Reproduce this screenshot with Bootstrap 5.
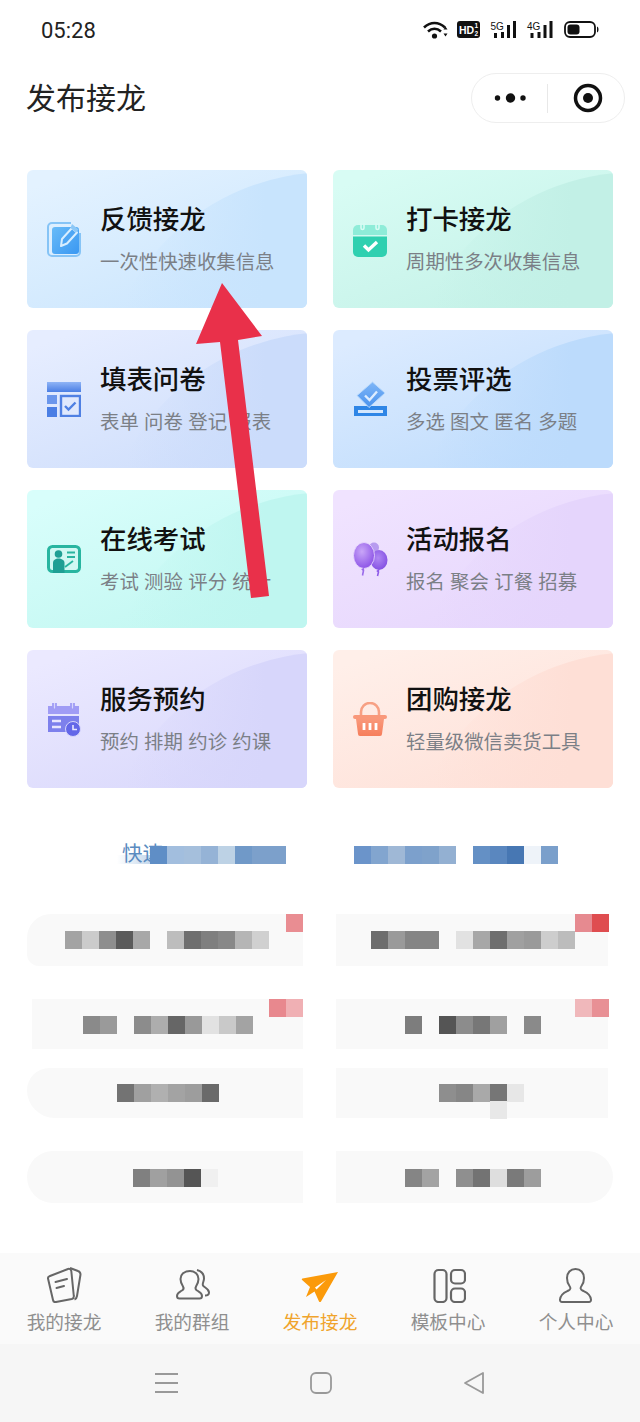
<!DOCTYPE html>
<html lang="zh-CN">
<head>
    <meta charset="UTF-8">
    <meta name="viewport" content="width=device-width, initial-scale=1.0">
    <title>发布接龙</title>
    <link rel="stylesheet" href="https://cdn.jsdelivr.net/npm/bootstrap@5.3.0/dist/css/bootstrap.min.css">
    <style>
        body {
            width: 640px;
            height: 1422px;
            overflow: hidden;
            background: #fff;
            font-family: "Noto Sans CJK SC", "Liberation Sans", sans-serif;
            position: relative;
        }
        svg { display: block; }

        .status-bar { height: 60px; padding: 0 40px 0 41px; }
        .status-time { font-family: Roboto, sans-serif; font-size: 22px; color: #222; }

        .top-bar { height: 50px; margin: 13px 15px 0 26px; }
        .page-title { font-size: 30px; color: #222; line-height: 46px; margin-bottom: 4px; }
        .capsule {
            width: 154px;
            height: 50px;
            border: 1px solid #eeeeee;
            border-radius: 25px;
        }
        .capsule-dots { margin-left: 18px; }
        .capsule-line { width: 1px; height: 29px; margin-left: 12px; background: #e8e8e8; }
        .capsule-target { margin-left: 25px; }

        .jl-grid {
            display: grid;
            grid-template-columns: 280px 280px;
            grid-auto-rows: 138px;
            gap: 22px 26px;
            margin: 47px 0 0 27px;
        }
        .jl-card {
            position: relative;
            overflow: hidden;
            border-radius: 6px;
            padding-left: 20px;
            background: linear-gradient(160deg, var(--c1) 8%, var(--c2) 100%);
        }
        .jl-card::before {
            content: "";
            position: absolute;
            left: 73px;
            top: 2px;
            width: 460px;
            height: 460px;
            border-radius: 50%;
            background: linear-gradient(90deg, transparent 6%, var(--c2) 36%);
        }
        .jl-card > * { position: relative; }
        .jl-icon { width: 34px; margin-right: 19px; }
        .jl-text { padding-bottom: 3px; }
        .jl-name { font-size: 26.4px; line-height: 36px; font-weight: 500; color: #111; }
        .jl-desc { font-size: 19.4px; line-height: 28px; margin-top: 11px; color: #7b7f86; white-space: nowrap; word-spacing: 1px; }

        .c-blue { --c1: #e3f2ff; --c2: #c8e4fd; }
        .c-mint { --c1: #d8fcf4; --c2: #c2f0e6; }
        .c-peri { --c1: #e6edff; --c2: #cbdcfb; }
        .c-sky { --c1: #dcebff; --c2: #bcdbfc; }
        .c-aqua { --c1: #d8fefb; --c2: #bff6f0; }
        .c-lilac { --c1: #f0e3ff; --c2: #e5d5fc; }
        .c-violet { --c1: #ebe9ff; --c2: #d7d6fb; }
        .c-peach { --c1: #ffefe9; --c2: #fedfd6; }

        .quick-head { position: relative; height: 18px; margin-top: 58px; }
        .quick-head::before {
            content: "";
            position: absolute;
            left: 117px;
            top: 9px;
            width: 33px;
            height: 9px;
            background: linear-gradient(90deg, #fff, #c5d8ec);
        }
        .quick-text {
            position: absolute;
            left: 122px;
            top: -8px;
            font-size: 20.5px;
            line-height: 28px;
            color: #5a8bc0;
        }
        .pixel-strip { position: absolute; display: flex; height: 18px; }
        .pixel { width: 17px; height: 100%; flex: none; }

        .fuzzy-rows { margin: 50px 0 0 27px; }
        .fuzzy-row { display: flex; align-items: flex-start; }
        .fuzzy-pill { position: relative; background: #f9f9f9; flex: none; }

        .tab-bar {
            position: absolute;
            left: 0;
            right: 0;
            bottom: 78px;
            height: 91px;
            background: #fafafa;
        }
        .tab-item { width: 128px; padding-top: 14px; font-size: 18.7px; line-height: 26px; color: #8f8f8f; }
        .tab-item svg { margin: 0 auto 5px; }
        .tab-on { color: #f0a42c; }
        .sys-bar {
            position: absolute;
            left: 0;
            right: 0;
            bottom: 0;
            height: 78px;
            background: #f6f6f6;
        }
        .red-arrow { position: absolute; left: 190px; top: 280px; }
    </style>
</head>
<body>

<div class="status-bar d-flex align-items-center justify-content-between">
    <span class="status-time">05:28</span>
    <svg width="177" height="20" viewBox="0 0 177 20">
        <g fill="none" stroke="#111" stroke-width="2.6">
            <path d="M1 7.5C7.5 1.5 15.5 1.5 22 7.5"/>
            <path d="M5 11.5C9 8 14 8 18 11.5"/>
        </g>
        <circle cx="11.500" cy="16" r="2.600" fill="#111"/>
        <path d="M21 10l2-3 2 3zM21 14l2 3 2-3z" fill="#111" transform="translate(-.5 -.5)"/>
        <rect x="34" y="1" width="23" height="17" rx="3" fill="#111"/>
        <text x="36" y="14" font-family="Liberation Sans" font-weight="700" font-size="10.500" fill="#fff">HD</text>
        <text x="51.500" y="8" font-family="Liberation Sans" font-weight="700" font-size="6.500" fill="#fff">1</text>
        <text x="51.500" y="16" font-family="Liberation Sans" font-weight="700" font-size="6.500" fill="#fff">2</text>
        <g fill="#111">
            <text x="67.500" y="9.500" font-family="Liberation Sans" font-size="10">5G</text>
            <rect x="71" y="13" width="3" height="5"/><rect x="78" y="12" width="3" height="6"/>
            <rect x="84" y="5" width="3" height="13"/><rect x="90" y="1" width="3" height="17"/>
            <text x="104" y="9.500" font-family="Liberation Sans" font-size="10">4G</text>
            <rect x="107.500" y="13" width="3" height="5"/><rect x="114.500" y="12" width="3" height="6"/>
            <rect x="120.500" y="5" width="3" height="13"/><rect x="126.500" y="1" width="3" height="17"/>
        </g>
        <rect x="142" y="2" width="30" height="15" rx="5" fill="none" stroke="#111" stroke-width="1.800"/>
        <rect x="144.500" y="4.500" width="12" height="10" rx="3" fill="#111"/>
        <path d="M174 6.500c2 .5 2 5.500 0 6z" fill="#111"/>
    </svg>
</div>

<div class="top-bar d-flex align-items-center justify-content-between">
    <div class="page-title">发布接龙</div>
    <div class="capsule d-flex align-items-center">
        <svg class="capsule-dots" width="45" height="12" viewBox="0 0 45 12">
            <circle cx="7.500" cy="6" r="2.700" fill="#111"/><circle cx="20.500" cy="6" r="4.700" fill="#111"/><circle cx="33" cy="6" r="2.700" fill="#111"/>
        </svg>
        <div class="capsule-line"></div>
        <svg class="capsule-target" width="30" height="30" viewBox="0 0 30 30">
            <circle cx="15" cy="15" r="12.500" fill="none" stroke="#111" stroke-width="3.500"/><circle cx="15" cy="15" r="5" fill="#111"/>
        </svg>
    </div>
</div>

<div class="jl-grid">
    <div class="jl-card c-blue d-flex align-items-center">
        <svg class="jl-icon" height="36" viewBox="0 0 34 36">
            <defs><linearGradient id="g1" x1="0" y1="0" x2="1" y2="1"><stop offset="0" stop-color="#68bbf8"/><stop offset="1" stop-color="#3a98f2"/></linearGradient></defs>
            <path d="M24 2H5a4 4 0 0 0-4 4v25a4 4 0 0 0 4 4h24a4 4 0 0 0 4-4V12" fill="none" stroke="#86c4f6" stroke-width="2"/>
            <rect x="5" y="6" width="27" height="27" rx="3" fill="url(#g1)"/>
            <path d="M14 25l1-7 10-11 5 4.500-10 11z" fill="#4ea6f4" stroke="#d8eeff" stroke-width="2" stroke-linejoin="round"/>
            <path d="M25 3l6.500 5.500-2.500 3-5.500-4.500z" fill="#8cc8f7"/>
        </svg>
        <div class="jl-text"><div class="jl-name">反馈接龙</div><div class="jl-desc">一次性快速收集信息</div></div>
    </div>
    <div class="jl-card c-mint d-flex align-items-center">
        <svg class="jl-icon" height="36" viewBox="0 0 34 36">
            <path d="M5 4h24a5 5 0 0 1 5 5v5H0V9a5 5 0 0 1 5-5z" fill="#8eecd8"/>
            <path d="M0 15.500h34V31a5 5 0 0 1-5 5H5a5 5 0 0 1-5-5z" fill="#2fd0b0"/>
            <path d="M8 2v5a1.500 1.500 0 0 0 3 0V2M23 2v5a1.500 1.500 0 0 0 3 0V2" stroke="#d8fcf4" stroke-width="1.600" fill="none"/>
            <path d="M11 24.500l4.500 4.500 8.500-8" fill="none" stroke="#fff" stroke-width="3.400"/>
        </svg>
        <div class="jl-text"><div class="jl-name">打卡接龙</div><div class="jl-desc">周期性多次收集信息</div></div>
    </div>
    <div class="jl-card c-peri d-flex align-items-center">
        <svg class="jl-icon" height="35" viewBox="0 0 34 35">
            <defs><linearGradient id="g3" x1="0" y1="0" x2="0" y2="1"><stop offset="0" stop-color="#8fb4f6"/><stop offset="1" stop-color="#4a7ee4"/></linearGradient></defs>
            <rect x="0" y="0" width="34" height="10" fill="url(#g3)"/>
            <rect x="0" y="13" width="10" height="9" fill="#6a96ec"/>
            <rect x="0" y="25" width="10" height="10" fill="#4a7ee4"/>
            <rect x="14" y="14" width="19" height="20" fill="#dfe8fd" stroke="#4f80e3" stroke-width="2.400"/>
            <path d="M18 24l3.500 3.500 7-7" fill="none" stroke="#4f80e3" stroke-width="2.400"/>
        </svg>
        <div class="jl-text"><div class="jl-name">填表问卷</div><div class="jl-desc">表单 问卷 登记 报表</div></div>
    </div>
    <div class="jl-card c-sky d-flex align-items-center">
        <svg class="jl-icon" height="37" viewBox="0 0 34 37">
            <defs><linearGradient id="g4" x1="0" y1="0" x2="0" y2="1"><stop offset="0" stop-color="#7fb6f7"/><stop offset="1" stop-color="#4a93ee"/></linearGradient></defs>
            <path d="M1 25h33v10H1z" fill="#2f86e6"/>
            <path d="M5 29h25v3H5z" fill="#d4e7fd"/>
            <path d="M19.500 1L32 12 16 26.500 4 14.500z" fill="url(#g4)" stroke="#bcdbfc" stroke-width="1" stroke-linejoin="round"/>
            <path d="M12 14.500l4.500 4.500 7.500-8.500" fill="none" stroke="#dcecff" stroke-width="2.400"/>
        </svg>
        <div class="jl-text"><div class="jl-name">投票评选</div><div class="jl-desc">多选 图文 匿名 多题</div></div>
    </div>
    <div class="jl-card c-aqua d-flex align-items-center">
        <svg class="jl-icon" height="28" viewBox="0 0 34 28">
            <rect x="1.500" y="1.500" width="31" height="25" rx="4" fill="#d0f8f3" stroke="#28b5a0" stroke-width="3"/>
            <circle cx="11.500" cy="9" r="3.800" fill="#1f9f94"/>
            <path d="M6 28v-10c0-3 2.500-4.500 5.500-4.500s6 1.500 6 4.500v10z" fill="#1f9f94"/>
            <path d="M20 7.500h8M20 12h8" stroke="#28b5a0" stroke-width="2"/>
            <path d="M18 22l8-6" stroke="#28b5a0" stroke-width="1.800"/>
        </svg>
        <div class="jl-text"><div class="jl-name">在线考试</div><div class="jl-desc">考试 测验 评分 统计</div></div>
    </div>
    <div class="jl-card c-lilac d-flex align-items-center">
        <svg class="jl-icon" height="35" viewBox="0 0 35 35" style="width:35px;margin-right:18px">
            <defs>
                <radialGradient id="g6" cx=".4" cy=".35" r=".7"><stop offset="0" stop-color="#c9a6f8"/><stop offset="1" stop-color="#8a50e6"/></radialGradient>
                <radialGradient id="g6b" cx=".45" cy=".4" r=".7"><stop offset="0" stop-color="#b088f3"/><stop offset="1" stop-color="#7d48e0"/></radialGradient>
            </defs>
            <circle cx="21" cy="5.500" r="5" fill="#b79bef"/>
            <ellipse cx="26" cy="18" rx="8.500" ry="10" fill="url(#g6b)"/>
            <path d="M26 28l-1.500 1 1 1-1 4" stroke="#8f5be8" stroke-width="1.600" fill="none"/>
            <ellipse cx="11" cy="13.500" rx="10.500" ry="13" fill="url(#g6)" stroke="#eee0fe" stroke-width=".8"/>
            <path d="M11 26.500l-1.500 1 1 1-1 5" stroke="#9a6bea" stroke-width="1.600" fill="none"/>
        </svg>
        <div class="jl-text"><div class="jl-name">活动报名</div><div class="jl-desc">报名 聚会 订餐 招募</div></div>
    </div>
    <div class="jl-card c-violet d-flex align-items-center">
        <svg class="jl-icon" height="35" viewBox="0 0 34 35">
            <path d="M1 4h31v8H1z" fill="#a09cf5"/>
            <path d="M1 14h31v16H1z" fill="#7d80ec"/>
            <path d="M6 1v5a1.500 1.500 0 0 0 3 0V1M24 1v5a1.500 1.500 0 0 0 3 0V1" stroke="#a09cf5" stroke-width="1.800" fill="#d7d6fb"/>
            <path d="M5 19h9M5 25h9" stroke="#e8e6fe" stroke-width="2.400"/>
            <circle cx="26" cy="27" r="7.500" fill="#6367e8" stroke="#d7d6fb" stroke-width="1"/>
            <path d="M26 23v4.500h4" stroke="#e8e6fe" stroke-width="1.600" fill="none"/>
        </svg>
        <div class="jl-text"><div class="jl-name">服务预约</div><div class="jl-desc">预约 排期 约诊 约课</div></div>
    </div>
    <div class="jl-card c-peach d-flex align-items-center">
        <svg class="jl-icon" height="34" viewBox="0 0 34 34">
            <defs><linearGradient id="g8" x1="0" y1="0" x2="0" y2="1"><stop offset="0" stop-color="#f9987a"/><stop offset="1" stop-color="#f67e5c"/></linearGradient></defs>
            <path d="M8 15V10a9 9 0 0 1 18 0v5" fill="none" stroke="#f7a084" stroke-width="2.600"/>
            <rect x="0" y="13" width="34" height="4" rx="2" fill="#f9987a"/>
            <path d="M3 17h28l-2 15a2 2 0 0 1-2 2H7a2 2 0 0 1-2-2z" fill="url(#g8)"/>
            <path d="M11 21v7M17 21v7M23 21v7" stroke="#fff" stroke-width="2.800"/>
        </svg>
        <div class="jl-text"><div class="jl-name">团购接龙</div><div class="jl-desc">轻量级微信卖货工具</div></div>
    </div>
</div>

<div class="quick-head" id="quickHead">
    <span class="quick-text">快速</span>
</div>

<div class="fuzzy-rows" id="fuzzyRows"></div>

<div class="tab-bar d-flex">
    <div class="tab-item text-center">
        <svg width="36" height="36" viewBox="0 0 36 36" fill="none" stroke="#666" stroke-width="2" stroke-linejoin="round">
            <path d="M24 1l8 3c1.500.5 2.500 1.500 2.500 3.500L31 29c-.3 2-1 3-2.500 3.500"/>
            <path d="M4 9L22 2c1.500-.5 3 .3 3.300 2l2.500 25c.2 1.500-.5 2.500-2 3L10 35c-1.500.3-2.700-.5-3-2L2 11.500C1.700 10.300 2.700 9.500 4 9z" fill="#fafafa"/>
            <path d="M9.500 15l11.500-3M10.500 21l7.500-2" stroke-linecap="round"/>
        </svg>
        我的接龙
    </div>
    <div class="tab-item text-center">
        <svg width="36" height="36" viewBox="0 0 36 36" fill="none" stroke="#666" stroke-width="2" stroke-linejoin="round">
            <path d="M23 3c4 1 7 4 7 8.500 0 3-2 5-1 7 1 2 6 3 6 7 0 2-2 3-4 3"/>
            <path d="M16 4c5 0 8.500 3.500 8.500 8 0 3-1.200 5.500-2.500 7.500-1 1.500-.5 3 1 4 2.500 1.500 5 2 5 5.500 0 1.500-.8 2.500-2.500 2.500H5.500C3.800 31.500 3 30.500 3 29c0-3.500 2.500-4 5-5.500 1.500-1 2-2.500 1-4C7.700 17.500 6.500 15 6.500 12c0-4.500 3.500-8 9.500-8z" fill="#fafafa"/>
        </svg>
        我的群组
    </div>
    <div class="tab-item text-center tab-on">
        <svg width="38" height="36" viewBox="0 0 38 36">
            <path d="M37 5L1.500 11.500c-.8.200-1 1-.4 1.500L9 20 5 30l8.500-5.500 4.500 10c.5.800 1.500.800 2 0z" fill="#fb9a0a"/>
            <path d="M25 13l-11 7.500 1.500 2z" fill="#fff"/>
        </svg>
        发布接龙
    </div>
    <div class="tab-item text-center">
        <svg width="36" height="36" viewBox="0 0 36 36" fill="none" stroke="#666" stroke-width="2.200">
            <rect x="4.500" y="3" width="12" height="32" rx="4"/>
            <rect x="21" y="3" width="14" height="13.500" rx="4"/>
            <rect x="21" y="21.500" width="14" height="13.500" rx="4"/>
        </svg>
        模板中心
    </div>
    <div class="tab-item text-center">
        <svg width="36" height="36" viewBox="0 0 36 36" fill="none" stroke="#666" stroke-width="2" stroke-linejoin="round">
            <path d="M17.500 2c5 0 8.500 3.500 8.500 9 0 3-1 6-2.500 8-1.500 2-1 3.500 1 4.500 3 1.500 8 3 8.500 9 .1 1.500-.8 2.500-2 2.500H4c-1.200 0-2.100-1-2-2.500.5-6 5.500-7.500 8.500-9 2-1 2.500-2.500 1-4.500C10 17 9 14 9 11c0-5.500 3.500-9 8.500-9z"/>
        </svg>
        个人中心
    </div>
</div>

<div class="sys-bar d-flex align-items-center">
    <svg class="mx-auto" width="340" height="24" viewBox="0 0 340 24" fill="none" stroke="#999" stroke-width="1.800">
        <path d="M5 3h23M5 12h23M5 21h23"/>
        <rect x="161" y="2" width="20" height="20" rx="5"/>
        <path d="M333 2v20L315 12z" stroke-linejoin="round"/>
    </svg>
</div>

<svg class="red-arrow" width="80" height="320" viewBox="190 280 80 320">
    <path d="M222 283L262 336 238 340 269 596 251 598 220 342 196 344z" fill="#e9304a"/>
</svg>

<script src="https://cdn.jsdelivr.net/npm/bootstrap@5.3.0/dist/js/bootstrap.bundle.min.js"></script>
<script>
    // mosaic blocks that hide the blurred text, one colour per 17px cell, null = gap
    function strip(x, y, colours) {
        let el = document.createElement("div");
        el.className = "pixel-strip";
        el.style.left = x + "px";
        el.style.top = y + "px";
        colours.forEach(c => {
            let cell = document.createElement("div");
            cell.className = "pixel";
            if (c) cell.style.background = c;
            el.appendChild(cell);
        });
        return el;
    }

    let head = document.getElementById("quickHead");
    head.appendChild(strip(150, 0, ["#5f8ec6", "#a2bede", "#a5bfdc", "#95b3d6", "#bdd2e5", "#7099c8", "#7ca0cb", "#7ca0cb"]));
    head.appendChild(strip(354, 0, ["#6b94ca", "#82a5cf", "#9fb8d6", "#7ca0cc", "#7fa2cb", "#93b0d2", null, "#6490c5", "#5a87bf", "#4777b3", "#eef3f9", "#7a9fcb"]));

    // offsets are relative to each pill; x values read off the picture
    let rows = [
        { gap: 33, mb: 33, pills: [
            { w: 276, h: 52, ml: 0, r: "24px 0 0 12px", cells: [38, 17, ["#a3a3a3", "#cbcbcb", "#8e8e8e", "#5b5b5b", "#a8a8a8", null, "#bdbdbd", "#6f6f6f", "#7f7f7f", "#888888", "#b5b5b5", "#d0d0d0"]], red: [259, 0, ["#e98d92"]] },
            { w: 272, h: 52, ml: 0, r: "0", cells: [35, 17, ["#6d6d6d", "#9a9a9a", "#858585", "#858585", null, "#e2e2e2", "#a7a7a7", "#6e6e6e", "#a0a0a0", "#9a9a9a", "#cdcdcd", "#bcbcbc"]], red: [239, 0, ["#e68a90", "#df4d50"]] }
        ]},
        { gap: 33, mb: 19, pills: [
            { w: 271, h: 50, ml: 5, r: "0", cells: [51, 17, ["#8a8a8a", "#9a9a9a", null, "#8c8c8c", "#adadad", "#666666", "#999999", "#e2e2e2", "#c9c9c9", "#a3a3a3"]], red: [237, 0, ["#e8888e", "#f0b0b4"]] },
            { w: 272, h: 50, ml: 0, r: "0", cells: [69, 17, ["#7d7d7d", null, "#555555", "#8c8c8c", "#777777", "#a0a0a0", null, "#8a8a8a"]], red: [239, 0, ["#f0b8bb", "#e89095"]] }
        ]},
        { gap: 33, mb: 33, pills: [
            { w: 276, h: 50, ml: 0, r: "24px 0 0 30px", cells: [90, 16, ["#737373", "#a0a0a0", "#b0b0b0", "#a3a3a3", "#9d9d9d", "#6a6a6a"]] },
            { w: 272, h: 50, ml: 0, r: "0", cells: [103, 16, ["#8e8e8e", "#868686", "#a9a9a9", "#767676", "#e7e7e7"]], extra: [154, 33, ["#e8e8e8"]] }
        ]},
        { gap: 33, mb: 0, pills: [
            { w: 276, h: 52, ml: 0, r: "26px 0 0 26px", cells: [106, 18, ["#808080", "#a0a0a0", "#939393", "#555555", "#f0f0f0"]] },
            { w: 277, h: 52, ml: 0, r: "0 26px 26px 0", cells: [69, 18, ["#858585", "#a3a3a3", null, "#8f8f8f", "#737373", "#dedede", "#7a7a7a", "#9d9d9d"]] }
        ]}
    ];

    let wrap = document.getElementById("fuzzyRows");
    rows.forEach(row => {
        let rowEl = document.createElement("div");
        rowEl.className = "fuzzy-row";
        rowEl.style.marginBottom = row.mb + "px";
        row.pills.forEach((p, i) => {
            let pill = document.createElement("div");
            pill.className = "fuzzy-pill";
            pill.style.width = p.w + "px";
            pill.style.height = p.h + "px";
            pill.style.borderRadius = p.r;
            pill.style.marginLeft = (i ? row.gap : p.ml) + "px";
            pill.appendChild(strip(...p.cells));
            if (p.red) pill.appendChild(strip(...p.red));
            if (p.extra) pill.appendChild(strip(...p.extra));
            rowEl.appendChild(pill);
        });
        wrap.appendChild(rowEl);
    });
</script>
</body>
</html>
